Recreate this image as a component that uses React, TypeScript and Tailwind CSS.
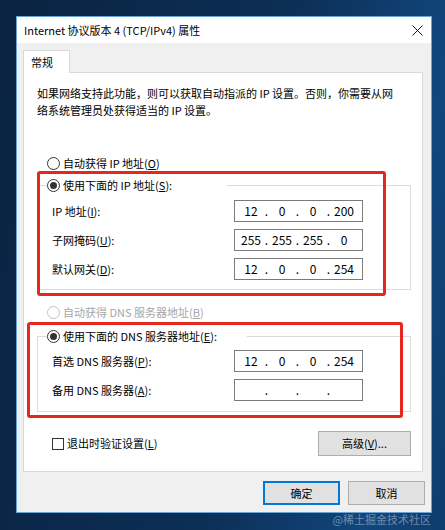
import React from 'react';

const FONT = "font-['Noto_Sans_CJK_SC','Noto_Sans',sans-serif]";

const Radio: React.FC<{ checked?: boolean; disabled?: boolean }> = ({ checked, disabled }) => (
  <span
    className={`flex h-[13px] w-[13px] shrink-0 items-center justify-center rounded-full border bg-white ${
      disabled ? 'border-[#c4c4c4]' : 'border-[#333333]'
    }`}
  >
    {checked && <span className="h-[7px] w-[7px] rounded-full bg-[#333333]" />}
  </span>
);

const IpBox: React.FC<{ parts: string[] }> = ({ parts }) => (
  <div className="flex h-[22px] w-[129px] items-center border border-[#7a7a7a] bg-white pl-[3px] text-[12px] text-black">
    {parts.map((p, i) => (
      <React.Fragment key={i}>
        {i > 0 && <span className="w-[5px] text-center">.</span>}
        <span className="w-[26px] text-center">{p}</span>
      </React.Fragment>
    ))}
  </div>
);

const Row: React.FC<{ label: React.ReactNode; parts: string[] }> = ({ label, parts }) => (
  <div className="flex items-center pl-[14px]">
    <span className="w-[182px] whitespace-nowrap text-[11px]">{label}</span>
    <IpBox parts={parts} />
  </div>
);

export default function App() {
  return (
    <div
      className={`relative h-[530px] w-[445px] overflow-hidden bg-[linear-gradient(100deg,#0a2341_0%,#0c2f56_55%,#11467c_85%,#0e3d6c_100%)] pl-[16px] pt-[16px] ${FONT} text-black`}
    >
      {/* Window */}
      <div className="flex h-[497px] w-[416px] flex-col border border-[#6aa3d6] bg-[#f0f0f0]">
        {/* Title bar */}
        <div className="flex h-[26px] items-center justify-between bg-white pl-[7px] pr-[8px]">
          <span className="whitespace-nowrap text-[11px]">Internet 协议版本 4 (TCP/IPv4) 属性</span>
          <svg width="11" height="11" viewBox="0 0 11 11">
            <path d="M0.5 0.5 L10.5 10.5 M10.5 0.5 L0.5 10.5" stroke="#1a1a1a" strokeWidth="1" />
          </svg>
        </div>

        <div className="pl-[6px] pt-[7px]">
          {/* Tab */}
          <div className="relative z-10 -mb-px flex h-[23px] w-[47px] items-center border border-b-0 border-[#d9d9d9] bg-white pl-[7px] text-[11px]">
            常规
          </div>

          {/* Panel */}
          <div className="flex h-[400px] w-[400px] flex-col border border-[#d9d9d9] bg-white">
            <p className="whitespace-nowrap pl-[13px] pt-[12px] text-[11px] leading-[17px]">
              如果网络支持此功能，则可以获取自动指派的 IP 设置。否则，你需要从网
              <br />
              络系统管理员处获得适当的 IP 设置。
            </p>

            <div className="mt-[36px] flex h-[16px] items-center gap-[3px] pl-[23px] text-[11px]">
              <Radio />
              <span>
                自动获得 IP 地址(<u>O</u>)
              </span>
            </div>

            <fieldset className="ml-[13px] mt-[6px] w-[374px] border border-[#dcdcdc] pb-[9px] pt-[7px]">
              <legend className="ml-[9px] flex h-[16px] w-[180px] items-center gap-[3px] bg-white text-[11px]">
                <Radio checked />
                <span>
                  使用下面的 IP 地址(<u>S</u>):
                </span>
              </legend>
              <div className="flex flex-col gap-[7px]">
                <Row label={<>IP 地址(<u>I</u>):</>} parts={['12', '0', '0', '200']} />
                <Row label={<>子网掩码(<u>U</u>):</>} parts={['255', '255', '255', '0']} />
                <Row label={<>默认网关(<u>D</u>):</>} parts={['12', '0', '0', '254']} />
              </div>
            </fieldset>

            <div className="mt-[14px] flex h-[16px] items-center gap-[3px] pl-[23px] text-[11px] text-[#a6a6a6]">
              <Radio disabled />
              <span>
                自动获得 DNS 服务器地址(<u>B</u>)
              </span>
            </div>

            <fieldset className="ml-[13px] mt-[8px] w-[374px] border border-[#dcdcdc] pb-[10px] pt-[6px]">
              <legend className="ml-[9px] flex h-[16px] w-[200px] items-center gap-[3px] bg-white text-[11px]">
                <Radio checked />
                <span>
                  使用下面的 DNS 服务器地址(<u>E</u>):
                </span>
              </legend>
              <div className="flex flex-col gap-[7px]">
                <Row label={<>首选 DNS 服务器(<u>P</u>):</>} parts={['12', '0', '0', '254']} />
                <Row label={<>备用 DNS 服务器(<u>A</u>):</>} parts={['', '', '', '']} />
              </div>
            </fieldset>

            <div className="mt-[19px] flex items-center justify-between pl-[28px] pr-[11px]">
              <div className="flex items-center gap-[3px] text-[11px]">
                <span className="h-[12px] w-[12px] border border-[#333333] bg-white" />
                <span>
                  退出时验证设置(<u>L</u>)
                </span>
              </div>
              <button className="flex h-[25px] w-[93px] items-center justify-center border border-[#adadad] bg-[#e1e1e1] text-[11px]">
                高级(<u>V</u>)...
              </button>
            </div>
          </div>

          {/* Buttons */}
          <div className="mt-[9px] flex justify-end gap-[8px] pr-[6px]">
            <button className="flex h-[24px] w-[77px] items-center justify-center border-2 border-[#0078d7] bg-[#e1e1e1] text-[11px]">
              确定
            </button>
            <button className="flex h-[24px] w-[77px] items-center justify-center border border-[#adadad] bg-[#e1e1e1] text-[11px]">
              取消
            </button>
          </div>
        </div>
      </div>

      {/* Red annotation boxes */}
      <div className="pointer-events-none absolute left-[37px] top-[171px] h-[125px] w-[349px] rounded-[3px] border-[3px] border-[#e5281f]" />
      <div className="pointer-events-none absolute left-[27px] top-[322px] h-[96px] w-[376px] rounded-[3px] border-[3px] border-[#e5281f]" />

      {/* Watermark */}
      <span className="absolute bottom-[3px] right-[14px] text-[11px] text-white/40">@稀土掘金技术社区</span>
    </div>
  );
}
